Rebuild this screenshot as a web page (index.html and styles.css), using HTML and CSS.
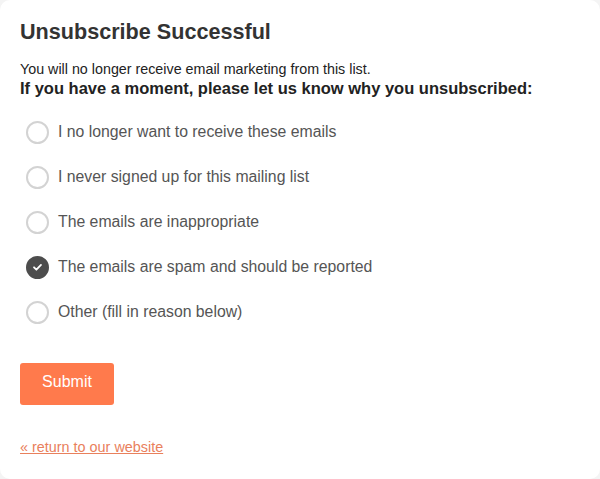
FILE: index.html
```html
<!DOCTYPE html>
<html lang="en">
<head>
<meta charset="utf-8">
<title>Unsubscribe Successful</title>
<link rel="stylesheet" href="styles.css">
</head>
<body>
<div class="card">
  <h1 class="title">Unsubscribe Successful</h1>
  <p class="note">You will no longer receive email marketing from this list.</p>
  <p class="ask">If you have a moment, please let us know why you unsubscribed:</p>
  <ul class="options">
    <li class="option"><span class="radio"></span><span class="label">I no longer want to receive these emails</span></li>
    <li class="option"><span class="radio"></span><span class="label">I never signed up for this mailing list</span></li>
    <li class="option"><span class="radio"></span><span class="label">The emails are inappropriate</span></li>
    <li class="option"><span class="radio checked"><svg viewBox="0 0 24 24" width="24" height="24"><path d="M7.6 12.4l3 3 5.8-6" fill="none" stroke="#fff" stroke-width="2.3" stroke-linecap="round" stroke-linejoin="round"/></svg></span><span class="label">The emails are spam and should be reported</span></li>
    <li class="option"><span class="radio"></span><span class="label">Other (fill in reason below)</span></li>
  </ul>
  <button class="submit" type="button">Submit</button>
  <a class="back" href="#">« return to our website</a>
</div>
</body>
</html>
```
FILE: styles.css
```css
html, body {
  margin: 0;
  padding: 0;
  background: #f4f4f4;
}
body {
  font-family: "Liberation Sans", Arial, sans-serif;
  color: #333;
}
.card {
  box-sizing: border-box;
  width: 600px;
  height: 479px;
  background: #fff;
  border-radius: 10px;
  padding: 19px 20px 0 20px;
  display: flex;
  flex-direction: column;
  align-items: flex-start;
}
.title {
  margin: 0;
  font-size: 21.6px;
  line-height: 26px;
  font-weight: bold;
  color: #333;
}
.note {
  margin: 15px 0 0 0;
  font-size: 14.3px;
  line-height: 18px;
  color: #222;
}
.ask {
  margin: 0;
  font-size: 16.5px;
  line-height: 20px;
  font-weight: bold;
  color: #222;
}
.options {
  list-style: none;
  margin: 22px 0 0 0;
  padding: 0;
  display: flex;
  flex-direction: column;
  gap: 21px;
}
.option {
  display: flex;
  align-items: center;
  gap: 9px;
  height: 24px;
  padding-left: 6px;
}
.radio {
  box-sizing: border-box;
  width: 23px;
  height: 23px;
  border: 2px solid #d3d3d3;
  border-radius: 50%;
  display: flex;
  align-items: center;
  justify-content: center;
}
.radio.checked {
  background: #4d4d4d;
  border-color: #4d4d4d;
}
.radio svg {
  width: 22px;
  height: 22px;
}
.label {
  font-size: 15.8px;
  color: #555;
}
.submit {
  margin-top: 39px;
  width: 94px;
  height: 42px;
  border: none;
  border-radius: 3px;
  background: #ff7a4c;
  color: #fff;
  font-family: "Liberation Sans", Arial, sans-serif;
  font-size: 16px;
  padding: 0 0 4px 0;
}
.back {
  margin-top: 34px;
  font-size: 14.4px;
  color: #e9805c;
  text-decoration: underline;
}
```
